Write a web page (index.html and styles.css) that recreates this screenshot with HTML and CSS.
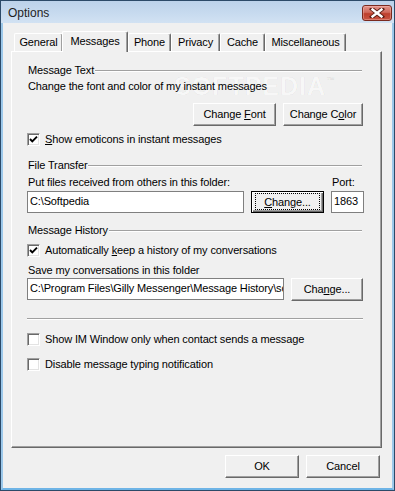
FILE: index.html
```html
<!DOCTYPE html>
<html>
<head>
<meta charset="utf-8">
<link rel="stylesheet" href="styles.css">
</head>
<body>
<div class="window">
  <div class="titlebar">
    <span class="title">Options</span>
    <div class="close">
      <svg width="16" height="10" viewBox="0 0 16 10">
        <path d="M3 1 L13 9 M13 1 L3 9" stroke="#5a1d14" stroke-width="4.2" stroke-linecap="square" fill="none"/>
        <path d="M3.5 1.5 L12.5 8.5 M12.5 1.5 L3.5 8.5" stroke="#ffffff" stroke-width="2.4" stroke-linecap="square" fill="none"/>
      </svg>
    </div>
  </div>
  <div class="client">
    <div class="tabs">
      <div class="tab w-general">General</div>
      <div class="tab sel w-messages">Messages</div>
      <div class="tab w-phone">Phone</div>
      <div class="tab w-privacy">Privacy</div>
      <div class="tab w-cache">Cache</div>
      <div class="tab w-misc">Miscellaneous</div>
    </div>
    <div class="panel">
      <div class="watermark">SOFTPEDIA<sup>™</sup></div>

      <div class="group m12"><span>Message Text</span><div class="gline"></div></div>
      <div class="text m3">Change the font and color of my instant messages</div>
      <div class="btnrow m10">
        <div class="btn w-font"><span>Change <u>F</u>ont</span></div>
        <div class="btn w-color"><span>Change C<u>o</u>lor</span></div>
      </div>
      <div class="check m7"><span class="box checked"><svg width="11" height="11" viewBox="0 0 11 11"><path d="M2 5 L4.3 7.4 L9 2.6" stroke="#000" stroke-width="1.9" fill="none"/></svg></span><span><u>S</u>how emoticons in instant messages</span></div>

      <div class="group m13"><span>File Transfer</span><div class="gline"></div></div>
      <div class="labelrow m4"><span>Put files received from others in this folder:</span><span class="portlabel">Port:</span></div>
      <div class="inrow m2">
        <div class="field w-path1"><span>C:\Softpedia</span></div>
        <div class="btn def w-chg1"><span class="focus"><span><u>C</u>hange...</span></span></div>
        <div class="field w-port"><span>1863</span></div>
      </div>

      <div class="group m11"><span>Message History</span><div class="gline"></div></div>
      <div class="check m7"><span class="box checked"><svg width="11" height="11" viewBox="0 0 11 11"><path d="M2 5 L4.3 7.4 L9 2.6" stroke="#000" stroke-width="1.9" fill="none"/></svg></span><span>Automatically <u>k</u>eep a history of my conversations</span></div>
      <div class="text m7">Save my conversations in this folder</div>
      <div class="inrow2 m1">
        <div class="field w-path2"><span>C:\Program Files\Gilly Messenger\Message History\sc</span></div>
        <div class="btn w-chg2"><span>Cha<u>n</u>ge...</span></div>
      </div>

      <div class="sep m17"></div>
      <div class="check m13"><span class="box"></span><span>Show IM Window only when contact sends a message</span></div>
      <div class="check m12"><span class="box"></span><span>Disable message typing notification</span></div>
    </div>
    <div class="footer">
      <div class="btn w-ok"><span>OK</span></div>
      <div class="btn w-cancel"><span>Cancel</span></div>
    </div>
  </div>
</div>
</body>
</html>
```
FILE: styles.css
```css
* { box-sizing: border-box; }
html, body { margin: 0; padding: 0; }
body {
  font-family: "Liberation Sans", Arial, sans-serif;
  font-size: 11px;
  letter-spacing: -0.13px;
  color: #000;
  background: #fff;
}
u { text-decoration: underline; text-underline-offset: 1px; }

.window {
  width: 395px;
  height: 491px;
  border: 1px solid #2c4a68;
  display: flex;
  flex-direction: column;
  background: #f0f0f0;
}
.titlebar {
  height: 22px;
  flex: none;
  background: linear-gradient(#bcd2ea, #c8dbef 60%, #d2e2f3);
  display: flex;
  align-items: center;
  padding-left: 7px;
  position: relative;
}
.title {
  font-size: 12px;
  letter-spacing: 0;
  color: #1e1e1e;
  margin-top: 2px;
}
.close {
  position: absolute;
  left: 361px;
  top: 4px;
  width: 30px;
  height: 16px;
  border: 1px solid #7a2a1f;
  border-radius: 3px;
  background: linear-gradient(#e2948a, #d06a5c 45%, #bd3f2c 55%, #c95543);
  display: flex;
  align-items: center;
  justify-content: center;
  box-shadow: inset 0 0 0 1px rgba(255,210,200,0.35);
}
.close svg { display: block; }

.client {
  flex: 1;
  border-left: 2px solid #9cc8ea;
  border-right: 2px solid #9cc8ea;
  border-bottom: 2px solid #6eb4e6;
  padding: 8px 0 0 8px;
  display: flex;
  flex-direction: column;
}

.tabs {
  display: flex;
  align-items: flex-end;
  height: 20px;
  margin-left: 3px;
  position: relative;
  z-index: 1;
}
.tab {
  height: 18px;
  border-top: 1px solid #fff;
  border-left: 1px solid #fff;
  border-right: 1px solid #696969;
  box-shadow: inset -1px 0 0 #a0a0a0;
  border-radius: 2px 2px 0 0;
  text-align: center;
  line-height: 17px;
  background: #f0f0f0;
}
.tab.sel {
  height: 21px;
  margin-bottom: -1px;
  line-height: 19px;
  position: relative;
  z-index: 2;
}
.w-general { width: 49px; }
.w-messages { width: 66px; margin-left: -1px; }
.w-phone { width: 43px; }
.w-privacy { width: 49px; }
.w-cache { width: 45px; }
.w-misc { width: 81px; }

.panel {
  width: 371px;
  height: 397px;
  flex: none;
  border-top: 1px solid #fff;
  border-left: 1px solid #fff;
  border-right: 1px solid #696969;
  border-bottom: 1px solid #696969;
  box-shadow: inset -1px -1px 0 #a0a0a0;
  padding: 0 17px 0 15px;
  display: flex;
  flex-direction: column;
  position: relative;
}
.watermark {
  position: absolute;
  left: 162px;
  top: 20px;
  font-size: 25px;
  font-weight: bold;
  letter-spacing: 1px;
  color: rgba(255,255,255,0.55);
  -webkit-text-stroke: 0.6px rgba(0,0,0,0.07);
  pointer-events: none;
}
.watermark sup { font-size: 9px; vertical-align: 12px; }

.m1 { margin-top: 1px; }
.m2 { margin-top: 2px; }
.m3 { margin-top: 3px; }
.m4 { margin-top: 4px; }
.m7 { margin-top: 7px; }
.m10 { margin-top: 10px; }
.m11 { margin-top: 11px; }
.m12 { margin-top: 12px; }
.m13 { margin-top: 13px; }
.m17 { margin-top: 17px; }

.group {
  height: 13px;
  line-height: 13px;
  display: flex;
  align-items: center;
  padding-left: 1px;
  position: relative;
}
.gline {
  flex: 1;
  height: 2px;
  border-top: 1px solid #a0a0a0;
  border-bottom: 1px solid #fff;
  margin: 1px 2px 0 1px;
}
.text, .labelrow {
  height: 13px;
  line-height: 13px;
  padding-left: 1px;
  position: relative;
}
.labelrow { display: flex; justify-content: space-between; }
.portlabel { width: 32px; }

.btnrow {
  display: flex;
  justify-content: flex-end;
  gap: 7px;
  padding-right: 1px;
  position: relative;
}
.btn {
  height: 23px;
  border-top: 1px solid #fff;
  border-left: 1px solid #fff;
  border-right: 1px solid #696969;
  border-bottom: 1px solid #696969;
  box-shadow: inset -1px -1px 0 #a0a0a0;
  background: #f0f0f0;
  display: flex;
  align-items: center;
  justify-content: center;
  padding-bottom: 1px;
  white-space: nowrap;
}
.btn.def {
  border: 1px solid #000;
  box-shadow: inset 1px 1px 0 #fff, inset -1px -1px 0 #696969, inset -2px -2px 0 #a0a0a0;
}
.focus {
  display: flex;
  align-items: center;
  justify-content: center;
  width: 63px;
  height: 15px;
  outline: 1px dotted #000;
}
.w-font { width: 83px; }
.w-color { width: 80px; }
.w-chg1 { width: 73px; height: 22px; }
.w-chg2 { width: 72px; }
.w-ok { width: 74px; }
.w-cancel { width: 74px; }

.check {
  height: 13px;
  display: flex;
  align-items: center;
  gap: 5px;
  line-height: 13px;
}
.box {
  width: 13px;
  height: 13px;
  flex: none;
  background: #fff;
  border-top: 1px solid #a0a0a0;
  border-left: 1px solid #a0a0a0;
  border-right: 1px solid #fff;
  border-bottom: 1px solid #fff;
  box-shadow: inset 1px 1px 0 #696969, inset -1px -1px 0 #e3e3e3;
  display: flex;
  align-items: center;
  justify-content: center;
}
.box svg { display: block; }

.inrow, .inrow2 {
  display: flex;
  gap: 7px;
  align-items: flex-start;
}
.field {
  height: 22px;
  background: #fff;
  border: 1px solid #7f7f7f;
  line-height: 19px;
  padding-left: 2px;
  white-space: nowrap;
  overflow: hidden;
}
.w-path1 { width: 217px; }
.w-port { width: 33px; }
.w-path2 { width: 257px; }

.sep {
  height: 2px;
  border-top: 1px solid #a0a0a0;
  border-bottom: 1px solid #fff;
  margin-right: 1px;
}

.footer {
  display: flex;
  justify-content: flex-end;
  gap: 7px;
  margin-top: 7px;
  padding-right: 12px;
}
```
